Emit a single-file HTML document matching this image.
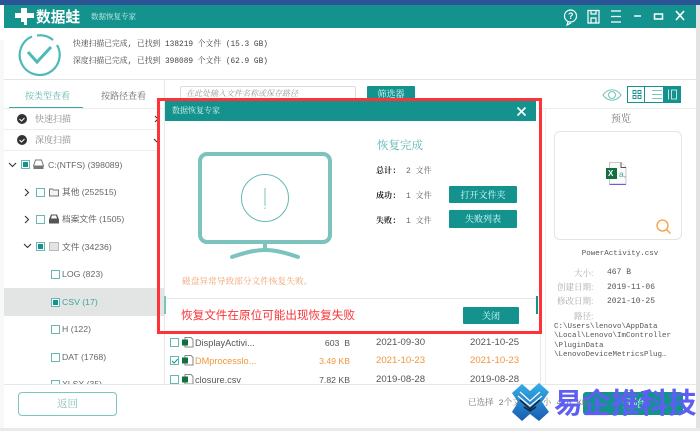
<!DOCTYPE html>
<html><head><meta charset="utf-8">
<style>
html,body{margin:0;padding:0}
body{width:700px;height:431px;overflow:hidden;position:relative;background:#f7f8f8;font-family:"Liberation Sans","Noto Sans CJK SC",sans-serif;font-size:8.700px;color:#666}
div,span,svg{position:absolute}
.t{white-space:nowrap;line-height:14px}
.s{font-family:"Liberation Mono","Noto Serif CJK SC",serif;font-size:9px}
.c{font-family:"Liberation Sans","Noto Serif CJK SC",serif}
.box{width:7px;height:7px;border:1px solid #66b9b3;background:#fff}
.box.on::after{content:"";position:absolute;left:1px;top:1px;width:5px;height:5px;background:#14938e}
.btn{background:#14938e;color:#dff;text-align:center;border-radius:1px;font-family:"Noto Serif CJK SC",serif}
.row{font-size:9.600px;color:#555}
.sz{font-size:8.700px;color:#555;right:350px;text-align:right}
</style></head><body>
<div style="left:0;top:0;width:700px;height:5px;background:#2b5597"></div>
<div style="left:0;top:5px;width:4px;height:35px;background:#fff"></div>
<div style="left:696px;top:5px;width:4px;height:426px;background:#e3e3e3"></div>
<div style="left:0;top:428px;width:700px;height:3px;background:#eaeaea"></div>
<div style="left:4px;top:5px;width:692px;height:423px;background:#fff"></div>
<!-- title -->
<div style="left:4px;top:5px;width:692px;height:23px;background:#14938e"></div>
<svg style="left:13px;top:7px" width="24" height="20" viewBox="0 0 24 20"><path d="M8 1h6v5h7v5h-7v7h-3v-3H8v-4H2V6h6z" fill="#fff"/></svg>
<div class="t" style="left:36px;top:8px;color:#fff;font-size:14.700px;font-weight:bold;line-height:17px;font-family:'Noto Sans CJK SC',sans-serif">数据蛙</div>
<div class="t c" style="left:91px;top:10px;color:#cfeeea;font-size:7.500px;line-height:14px">数据恢复专家</div>
<svg style="left:560px;top:8px" width="130" height="18" viewBox="0 0 130 18" fill="none" stroke="#fff" stroke-width="1.200">
<circle cx="10.500" cy="8" r="6"/><path d="M8 14l-1 3 4-2"/>
<path d="M28 2.500h11v12.500h-11zM31 15v-5h5v5M31 3v3h5V3"/>
<path d="M51 3h10M51 8.500h10M51 14h10"/>
<path d="M74 8h7" stroke-width="1.400"/>
<rect x="94.500" y="6" width="8" height="5" stroke-width="1.500"/>
<path d="M116 3l8 9M124 3l-8 9" stroke-width="1.600"/></svg>
<div class="t c" style="left:568px;top:9px;color:#fff;font-size:9px;font-weight:bold">?</div>
<!-- scan -->
<svg style="left:18px;top:33px" width="44" height="44" viewBox="0 0 44 44" fill="none" stroke="#4dbab8" stroke-width="2.200"><path d="M14 3.500A20 20 0 1 0 39 12M19 2.500A20 20 0 0 1 35 7"/><path d="M10 19l9 10 14-15" stroke-width="3"/></svg>
<div class="t s" style="left:73px;top:38px;color:#444;font-size:7.800px">快速扫描已完成, 已找到 138219 个文件 (15.3 GB)</div>
<div class="t s" style="left:73px;top:55px;color:#444;font-size:7.800px">深度扫描已完成, 已找到 398089 个文件 (62.9 GB)</div>
<div style="left:4px;top:79px;width:692px;height:1px;background:#e2e4e4"></div>
<!-- left -->
<div class="t c" style="left:25px;top:89px;color:#5fb4ae;font-size:9px">按类型查看</div>
<div class="t c" style="left:101px;top:89px;color:#666;font-size:9px">按路径查看</div>
<div style="left:9px;top:107px;width:74px;height:1px;background:#3fa7a1"></div>
<div style="left:4px;top:108px;width:160px;height:1px;background:#eee"></div>
<div style="left:164px;top:80px;width:1px;height:304px;background:#e6e8e8"></div>
<svg style="left:17px;top:114px" width="10" height="32" viewBox="0 0 10 32"><circle cx="5" cy="5" r="5" fill="#333"/><circle cx="5" cy="26" r="5" fill="#333"/><path d="M2.500 5l2 2 3-3M2.500 26l2 2 3-3" stroke="#fff" fill="none"/></svg>
<div class="t c" style="left:35px;top:112px;color:#888;font-size:9px">快速扫描</div>
<div class="t c" style="left:35px;top:133px;color:#888;font-size:9px">深度扫描</div>
<div style="left:4px;top:129px;width:154px;height:1px;background:#eee"></div>
<div style="left:4px;top:150px;width:154px;height:1px;background:#eee"></div>
<svg style="left:8px;top:110px" width="150" height="145" viewBox="0 0 150 145" fill="none" stroke="#333" stroke-width="1.100">
<path d="M1 53l3.500 3.500L8 53M17 79l3.500 3.500L17 86M17 106l3.500 3.500L17 113M16 134l3.500 3.500L23 134"/>
<path d="M147 6l3 3-3 3M146 29l3 3 1-1"/></svg>
<div class="box on" style="left:21px;top:160px"></div>
<svg style="left:33px;top:159px" width="11" height="11" viewBox="0 0 11 11"><path d="M2.500 1h6l2 6H.5z" fill="#fff" stroke="#777"/><rect x=".5" y="7" width="10" height="3" fill="#777"/></svg>
<div class="t" style="left:48px;top:158px">C:(NTFS) (398089)</div>
<div class="box" style="left:36px;top:188px"></div>
<svg style="left:49px;top:187px" width="10" height="10" viewBox="0 0 10 10"><path d="M.5 2h3l1 1h5v6H.5z" fill="#f3f3f3" stroke="#777"/></svg>
<div class="t" style="left:62px;top:185px">其他 (252515)</div>
<div class="box" style="left:36px;top:215px"></div>
<svg style="left:49px;top:214px" width="10" height="10" viewBox="0 0 10 10"><path d="M2 .5h6l2 5v4H0v-4z" fill="#555"/><path d="M3 1.500h4l1 3H2z" fill="#fff"/></svg>
<div class="t" style="left:62px;top:212px">档案文件 (1505)</div>
<div class="box on" style="left:36px;top:242px"></div>
<div style="left:49px;top:242px;width:8px;height:7px;background:#e3e3e3;border:1px solid #bbb"></div>
<div class="t" style="left:62px;top:240px">文件 (34236)</div>
<div class="box" style="left:51px;top:270px"></div>
<div class="t" style="left:62px;top:267px">LOG (823)</div>
<div style="left:4px;top:288px;width:160px;height:28px;background:#e3e5e4"></div>
<div class="box on" style="left:51px;top:298px"></div>
<div class="t" style="left:62px;top:295px;color:#3ea39d">CSV (17)</div>
<div class="box" style="left:51px;top:325px"></div>
<div class="t" style="left:62px;top:322px">H (122)</div>
<div class="box" style="left:51px;top:353px"></div>
<div class="t" style="left:62px;top:350px">DAT (1768)</div>
<div style="left:4px;top:376px;width:160px;height:8px;overflow:hidden"><div class="box" style="left:47px;top:4px"></div><div class="t" style="left:58px;top:1px">XLSX (35)</div></div>
<div style="left:4px;top:384px;width:692px;height:1px;background:#e6e8e8"></div>
<div class="c" style="left:18px;top:392px;width:97px;height:22px;border:1px solid #7cc6c0;border-radius:4px;text-align:center;line-height:23px;color:#85bcb8;font-size:10.500px">返回</div>
<!-- toolbar -->
<div style="left:180px;top:86px;width:174px;height:16px;border:1px solid #ddd;border-radius:2px"></div>
<div class="t c" style="left:186px;top:87px;font-size:8px;color:#999;font-style:italic">在此处输入文件名称或保存路径</div>
<div class="btn" style="left:367px;top:86px;width:48px;height:15px;font-size:9px;line-height:15px">筛选器</div>
<svg style="left:602px;top:88px" width="20" height="14" viewBox="0 0 20 14" fill="none" stroke="#7cc6c0" stroke-width="1.100"><path d="M1 7c5-7 13-7 18 0-5 7-13 7-18 0z"/><circle cx="10" cy="7" r="3.500"/></svg>
<div style="left:627px;top:86px;width:52px;height:15px;border:1px solid #14938e;background:#fff"></div>
<div style="left:644px;top:86px;width:1px;height:17px;background:#14938e"></div>
<div style="left:663px;top:86px;width:18px;height:17px;background:#14938e"></div>
<svg style="left:627px;top:86px" width="54" height="17" viewBox="0 0 54 17" fill="none"><path d="M6 4.500h3v3H6zM11 4.500h3v3h-3zM6 9.500h3v3H6zM11 9.500h3v3h-3z" stroke="#14938e" stroke-width=".9"/><path d="M25 4.500h10M25 8.500h10M25 12.500h10" stroke="#7cc6c0"/><path d="M41.500 3.500v10M44.500 4h5v9h-5z" stroke="#bfe6e2"/></svg>
<div style="left:165px;top:108px;width:531px;height:1px;background:#eef0f0"></div>
<!-- preview -->
<div style="left:545px;top:108px;width:1px;height:276px;background:#eee"></div>
<div class="t c" style="left:611px;top:113px;font-size:10px;color:#777">预览</div>
<div style="left:554px;top:131px;width:126px;height:107px;border:1px solid #e4e4e4;border-radius:6px"></div>
<svg style="left:606px;top:161px" width="22" height="25" viewBox="0 0 22 25"><path d="M3.500 1.500H15l5 5V23H3.500z" fill="#fafafa" stroke="#c8c8c8"/><path d="M3.500 23.500H20" stroke="#6a5ce0"/><path d="M15 1.500v5h5" fill="#fff" stroke="#555"/><rect x="0" y="7" width="11" height="11" fill="#12703f"/></svg>
<div class="t" style="left:608px;top:167px;color:#fff;font-size:8px;font-weight:bold">X</div>
<div class="t" style="left:619px;top:167px;color:#3fa58f;font-size:8.500px">a,</div>
<svg style="left:655px;top:218px" width="17" height="17" viewBox="0 0 17 17" fill="none" stroke="#f2a03d" stroke-width="1.300"><circle cx="7.500" cy="7.500" r="5.500"/><path d="M11.500 11.500l4 4"/></svg>
<div class="t s" style="left:540px;width:160px;top:247px;text-align:center;color:#555;font-size:7.500px">PowerActivity.csv</div>
<div class="t c" style="left:574px;top:266px;color:#aaa;font-size:8.500px">大小:</div>
<div class="t s" style="left:607px;top:266px;color:#555;font-size:8px">467  B</div>
<div class="t c" style="left:557px;top:280px;color:#aaa;font-size:8.500px">创建日期:</div>
<div class="t s" style="left:607px;top:281px;color:#555;font-size:8px">2019-11-06</div>
<div class="t c" style="left:557px;top:294px;color:#aaa;font-size:8.500px">修改日期:</div>
<div class="t s" style="left:607px;top:295px;color:#555;font-size:8px">2021-10-25</div>
<div class="t c" style="left:574px;top:309px;color:#aaa;font-size:8.500px">路径:</div>
<div class="s" style="left:554px;top:323px;color:#555;font-size:7.500px;line-height:9.400px;white-space:pre">C:\Users\lenovo\AppData
\Local\Lenovo\ImController
\PluginData
\LenovoDeviceMetricsPlug…</div>
<div class="btn" style="left:583px;top:392px;width:100px;height:23px;line-height:23px;border-radius:3px;font-size:11px">开始</div>
<!-- list -->
<div style="left:540px;top:334px;width:1px;height:50px;background:#e8e8e8"></div>
<div class="box" style="left:170px;top:338px"></div><div class="t row" style="left:195px;top:336px;font-size:9.200px">DisplayActivi...</div><div class="t sz" style="top:336px">603&nbsp;&nbsp;B</div><div class="t row" style="left:376px;top:336px">2021-09-30</div><div class="t row" style="left:470px;top:336px">2021-10-25</div>
<div class="box" style="left:170px;top:356px"></div><svg style="left:171px;top:357px" width="8" height="8" viewBox="0 0 8 8"><path d="M1 4l2 2 4-4" stroke="#14938e" fill="none"/></svg><div class="t row" style="left:195px;top:354px;color:#f0963c;font-size:9.200px">DMprocesslo...</div><div class="t sz" style="top:354px;color:#f0963c">3.49 KB</div><div class="t row" style="left:376px;top:354px;color:#f0963c">2021-10-23</div><div class="t row" style="left:470px;top:354px;color:#f0963c">2021-10-23</div>
<div class="box" style="left:170px;top:375px"></div><div class="t row" style="left:195px;top:373px;font-size:9.200px;height:11px;overflow:hidden">closure.csv</div><div class="t sz" style="top:373px">7.82 KB</div><div class="t row" style="left:376px;top:373px">2019-08-28</div><div class="t row" style="left:470px;top:373px">2019-08-28</div>
<svg style="left:182px;top:337px" width="12" height="47" viewBox="0 0 12 47"><path d="M3 .5h6l2 2V10H3z" fill="#fff" stroke="#888"/><rect x="0" y="2.500" width="6" height="6" fill="#12703f"/><path d="M3 18.500h6l2 2V28H3z" fill="#fff" stroke="#888"/><rect x="0" y="20.500" width="6" height="6" fill="#12703f"/><path d="M3 37.500h6l2 2V47H3z" fill="#fff" stroke="#888"/><rect x="0" y="39.500" width="6" height="6" fill="#12703f"/></svg>
<div class="t s" style="left:468px;top:396px;color:#777;font-size:8.500px">已选择 2个文件 大小 4.0 KB</div>
<!-- dialog -->
<div style="left:165px;top:101px;width:371px;height:230px;background:#fff"></div>
<div style="left:165px;top:101px;width:371px;height:20px;background:#14938e"></div>
<div class="t c" style="left:172px;top:105px;color:#d8f2ee;font-size:8px;line-height:12px">数据恢复专家</div>
<svg style="left:516px;top:106px" width="11" height="11" viewBox="0 0 11 11"><path d="M1.500 1.500l8 8M9.500 1.500l-8 8" stroke="#fff" stroke-width="1.600"/></svg>
<svg style="left:195px;top:150px" width="140" height="112" viewBox="0 0 140 112" fill="none" stroke="#7cc3bd">
<rect x="5" y="4" width="130" height="88" rx="7" stroke-width="4"/>
<circle cx="70" cy="48" r="23.500" stroke="#66b9b3" stroke-width="1"/>
<path d="M70 38v18M70 57.500v1.500" stroke-width="1"/>
<path d="M70 94v5" stroke-width="4"/>
<path d="M37 107c12-4 22-7 33-7s21 3 33 7" stroke-width="4" stroke-linecap="round"/></svg>
<div class="t c" style="left:182px;top:274px;color:#f0a070;font-size:8.700px">磁盘异常导致部分文件恢复失败。</div>
<div style="left:165px;top:298px;width:371px;height:1px;background:#e6e6e6"></div>
<div style="left:164px;top:296px;width:2px;height:18px;background:#7cc3bd"></div>
<div style="left:536px;top:296px;width:2px;height:18px;background:#14938e"></div>
<div class="t" style="left:181px;top:307px;color:#f8343a;font-size:11.600px;line-height:16px;font-family:'Noto Sans CJK SC',sans-serif">恢复文件在原位可能出现恢复失败</div>
<div class="t c" style="left:377px;top:139px;color:#5bb5b0;font-size:11.500px">恢复完成</div>
<div class="t s" style="left:376px;top:165px;color:#222;font-size:8px;font-weight:bold">总计:</div><div class="t s" style="left:406px;top:165px;font-size:8px">2 文件</div>
<div class="t s" style="left:376px;top:190px;color:#222;font-size:8px;font-weight:bold">成功:</div><div class="t s" style="left:406px;top:190px;font-size:8px">1 文件</div>
<div class="t s" style="left:376px;top:215px;color:#222;font-size:8px;font-weight:bold">失败:</div><div class="t s" style="left:406px;top:215px;font-size:8px">1 文件</div>
<div class="btn" style="left:449px;top:186px;width:68px;height:17px;line-height:17px;font-size:9px">打开文件夹</div>
<div class="btn" style="left:449px;top:210px;width:68px;height:18px;line-height:18px;font-size:9px">失败列表</div>
<div class="btn" style="left:463px;top:307px;width:56px;height:17px;line-height:17px;font-size:9px">关闭</div>
<!-- red rect -->
<div style="left:157px;top:98px;width:379px;height:230px;border:3px solid #ff3237"></div>
<!-- watermark -->
<svg style="left:512px;top:383px" width="37" height="38" viewBox="0 0 37 38">
<defs><linearGradient id="g" x1="0" y1="0" x2="0" y2="1"><stop offset="0" stop-color="#35b0e8"/><stop offset="1" stop-color="#1a5cb0"/></linearGradient></defs>
<path d="M0 10L10 1l8 7 9-8 10 9-7 10 7 10-10 9-9-7-8 7L0 29l6-10z" fill="url(#g)"/>
<path d="M6 13l12 10L30 13M8 9l10 9 10-9" stroke="#fff" stroke-width="1.200" fill="none"/>
<path d="M8 17l10 9 10-9M12 24l6 4 6-4" stroke="#10243a" stroke-width="1.500" fill="none"/></svg>
<div class="t" style="left:554px;top:385px;color:#5e5ef2;font-size:28.500px;font-weight:bold;line-height:34px;font-family:'Noto Sans CJK SC',sans-serif">易企推科技</div>
</body></html>
